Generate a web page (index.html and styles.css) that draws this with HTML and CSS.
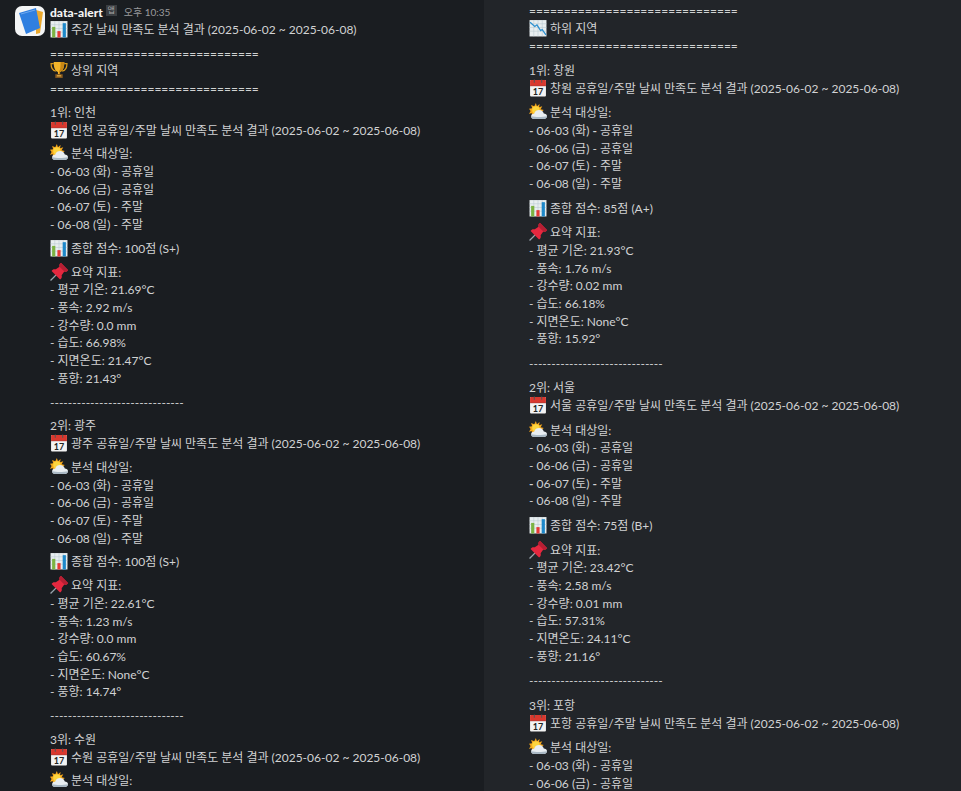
FILE: index.html
```html
<!DOCTYPE html>
<html lang="ko">
<head>
    <meta charset="UTF-8">
    <title>data-alert</title>
    <link rel="stylesheet" href="styles.css">
</head>
<body>

<!-- Emoji drawings -->
<svg class="defs" width="0" height="0">
    <symbol id="e-chart" viewBox="0 0 34 34">
        <rect x="1" y="2" width="32" height="31" fill="#e8eef0"/>
        <path d="M1 9h32M1 16h32M1 23h32M9 2v31M17 2v31M25 2v31" stroke="#b5c6ce" stroke-width="1"/>
        <rect x="4" y="13" width="6" height="20" fill="#7cb342"/>
        <rect x="14" y="21" width="6" height="12" fill="#e53935"/>
        <rect x="24" y="6" width="6" height="27" fill="#1e88c9"/>
    </symbol>
    <symbol id="e-down" viewBox="0 0 34 34">
        <rect x="1" y="2" width="32" height="31" fill="#e8eef0"/>
        <path d="M1 9h32M1 16h32M1 23h32M9 2v31M17 2v31M25 2v31" stroke="#b5c6ce" stroke-width="1"/>
        <path d="M2 6l9 8 4-3 7 11 3-2 7 10" fill="none" stroke="#2b8fd0" stroke-width="2.4"/>
    </symbol>
    <symbol id="e-trophy" viewBox="0 0 34 34">
        <path d="M7 5H2c0 8 3 13 9 14M27 5h5c0 8-3 13-9 14" fill="none" stroke="#d99a1c" stroke-width="2.4"/>
        <path d="M7 2h20c0 10-2 17-8 19v4h-4v-4C9 19 7 12 7 2z" fill="#f1b42a"/>
        <path d="M20 2h7c0 10-2 17-8 19v4h-2V20c3-4 3-10 3-18z" fill="#c98713"/>
        <rect x="10" y="25" width="14" height="7" fill="#8a5a1e"/>
        <rect x="13" y="27" width="8" height="2" fill="#e8b94a"/>
    </symbol>
    <symbol id="e-cal" viewBox="0 0 34 34">
        <rect x="2" y="2" width="30" height="31" rx="2" fill="#f3f3f3"/>
        <path d="M2 4a2 2 0 0 1 2-2h26a2 2 0 0 1 2 2v9H2z" fill="#d9382e"/>
        <path d="M2 13h30" stroke="#9a3b35" stroke-width="1"/>
        <path d="M10 1v6M24 1v6" stroke="#555" stroke-width="2"/>
        <text x="17" y="30" class="cal-num" text-anchor="middle">17</text>
    </symbol>
    <symbol id="e-sun" viewBox="0 0 34 34">
        <path d="M13 0l2 6 5-4-1 6 6-2-3 6 6 1-5 4 3 5H8l-2 3-1-6-5 2 3-6-3-4 6-1-2-6 6 2z" fill="#f6a81b"/>
        <circle cx="13" cy="13" r="7" fill="#fcd53f"/>
        <path d="M10 30c-4 0-6-2-6-5s3-5 6-5c1-5 5-7 9-7 5 0 8 3 9 7 3 0 6 2 6 5s-3 5-6 5z" fill="#e8edf1"/>
        <path d="M10 30c-4 0-6-2-6-5 8 2 21 2 30 0 0 3-3 5-6 5z" fill="#a9b8c4"/>
    </symbol>
    <symbol id="e-pin" viewBox="0 0 34 34">
        <path d="M14 20L1 33" stroke="#99a5ae" stroke-width="2.4"/>
        <path d="M21 0c-3 1-4 4-3 7l-7 5c-4-1-6 0-8 3l16 16c3-2 4-4 3-8l5-7c3 1 6 0 7-3z" fill="#e5283f"/>
        <path d="M21 0l13 13c-1 3-4 4-7 3L18 7c-1-3 0-6 3-7z" fill="#b51f33"/>
    </symbol>
    <symbol id="app-icon" viewBox="0 0 30 30">
        <rect width="30" height="30" rx="7" fill="#f4f5f6"/>
        <path d="M21 4l7 2-3 21-4 1z" fill="#eba92e"/>
        <path d="M4 7L21 2l4 20-14 6z" fill="#2f7fe0"/>
        <path d="M6 8l14-4" stroke="#6fa9ee" stroke-width="1"/>
    </symbol>
</svg>

<div class="panes">

    <!-- Left pane -->
    <div class="pane pane-left">
        <div class="msg">
            <svg class="avatar"><use href="#app-icon"/></svg>
            <div class="msg-body">
                <div class="msg-head">
                    <span class="sender">data-alert</span>
                    <span class="app-badge">앱</span>
                    <span class="time">오후 10:35</span>
                </div>
                <div class="line"><svg class="emoji"><use href="#e-chart"/></svg> 주간 날씨 만족도 분석 결과 (2025-06-02 ~ 2025-06-08)</div>

                <div class="block">
                    <div class="line">==============================</div>
                    <div class="line"><svg class="emoji"><use href="#e-trophy"/></svg> 상위 지역</div>
                    <div class="line">==============================</div>
                </div>

                <div class="block">
                    <div class="line">1위: 인천</div>
                    <div class="line"><svg class="emoji"><use href="#e-cal"/></svg> 인천 공휴일/주말 날씨 만족도 분석 결과 (2025-06-02 ~ 2025-06-08)</div>
                </div>
                <div class="block">
                    <div class="line"><svg class="emoji"><use href="#e-sun"/></svg> 분석 대상일:</div>
                    <div class="line">- 06-03 (화) - 공휴일</div>
                    <div class="line">- 06-06 (금) - 공휴일</div>
                    <div class="line">- 06-07 (토) - 주말</div>
                    <div class="line">- 06-08 (일) - 주말</div>
                </div>
                <div class="block">
                    <div class="line"><svg class="emoji"><use href="#e-chart"/></svg> 종합 점수: 100점 (S+)</div>
                </div>
                <div class="block">
                    <div class="line"><svg class="emoji"><use href="#e-pin"/></svg> 요약 지표:</div>
                    <div class="line">- 평균 기온: 21.69°C</div>
                    <div class="line">- 풍속: 2.92 m/s</div>
                    <div class="line">- 강수량: 0.0 mm</div>
                    <div class="line">- 습도: 66.98%</div>
                    <div class="line">- 지면온도: 21.47°C</div>
                    <div class="line">- 풍향: 21.43°</div>
                </div>
                <div class="block">
                    <div class="line">------------------------------</div>
                </div>

                <div class="block">
                    <div class="line">2위: 광주</div>
                    <div class="line"><svg class="emoji"><use href="#e-cal"/></svg> 광주 공휴일/주말 날씨 만족도 분석 결과 (2025-06-02 ~ 2025-06-08)</div>
                </div>
                <div class="block">
                    <div class="line"><svg class="emoji"><use href="#e-sun"/></svg> 분석 대상일:</div>
                    <div class="line">- 06-03 (화) - 공휴일</div>
                    <div class="line">- 06-06 (금) - 공휴일</div>
                    <div class="line">- 06-07 (토) - 주말</div>
                    <div class="line">- 06-08 (일) - 주말</div>
                </div>
                <div class="block">
                    <div class="line"><svg class="emoji"><use href="#e-chart"/></svg> 종합 점수: 100점 (S+)</div>
                </div>
                <div class="block">
                    <div class="line"><svg class="emoji"><use href="#e-pin"/></svg> 요약 지표:</div>
                    <div class="line">- 평균 기온: 22.61°C</div>
                    <div class="line">- 풍속: 1.23 m/s</div>
                    <div class="line">- 강수량: 0.0 mm</div>
                    <div class="line">- 습도: 60.67%</div>
                    <div class="line">- 지면온도: None°C</div>
                    <div class="line">- 풍향: 14.74°</div>
                </div>
                <div class="block">
                    <div class="line">------------------------------</div>
                </div>

                <div class="block">
                    <div class="line">3위: 수원</div>
                    <div class="line"><svg class="emoji"><use href="#e-cal"/></svg> 수원 공휴일/주말 날씨 만족도 분석 결과 (2025-06-02 ~ 2025-06-08)</div>
                </div>
                <div class="block">
                    <div class="line"><svg class="emoji"><use href="#e-sun"/></svg> 분석 대상일:</div>
                </div>
            </div>
        </div>
    </div>

    <!-- Right pane -->
    <div class="pane pane-right">
        <div class="block">
            <div class="line">==============================</div>
            <div class="line"><svg class="emoji"><use href="#e-down"/></svg> 하위 지역</div>
            <div class="line">==============================</div>
        </div>

        <div class="block">
            <div class="line">1위: 창원</div>
            <div class="line"><svg class="emoji"><use href="#e-cal"/></svg> 창원 공휴일/주말 날씨 만족도 분석 결과 (2025-06-02 ~ 2025-06-08)</div>
        </div>
        <div class="block">
            <div class="line"><svg class="emoji"><use href="#e-sun"/></svg> 분석 대상일:</div>
            <div class="line"><b>-</b> 06-03 (화) <b>-</b> 공휴일</div>
            <div class="line">- 06-06 (금) - 공휴일</div>
            <div class="line">- 06-07 (토) - 주말</div>
            <div class="line">- 06-08 (일) - 주말</div>
        </div>
        <div class="block">
            <div class="line"><svg class="emoji"><use href="#e-chart"/></svg> 종합 점수: 85점 (A+)</div>
        </div>
        <div class="block">
            <div class="line"><svg class="emoji"><use href="#e-pin"/></svg> 요약 지표:</div>
            <div class="line">- 평균 기온: 21.93°C</div>
            <div class="line">- 풍속: 1.76 m/s</div>
            <div class="line">- 강수량: 0.02 mm</div>
            <div class="line">- 습도: 66.18%</div>
            <div class="line">- 지면온도: None°C</div>
            <div class="line">- 풍향: 15.92°</div>
        </div>
        <div class="block">
            <div class="line">------------------------------</div>
        </div>

        <div class="block">
            <div class="line">2위: 서울</div>
            <div class="line"><svg class="emoji"><use href="#e-cal"/></svg> 서울 공휴일/주말 날씨 만족도 분석 결과 (2025-06-02 ~ 2025-06-08)</div>
        </div>
        <div class="block">
            <div class="line"><svg class="emoji"><use href="#e-sun"/></svg> 분석 대상일:</div>
            <div class="line">- 06-03 (화) - 공휴일</div>
            <div class="line">- 06-06 (금) - 공휴일</div>
            <div class="line"><b>-</b> 06-07 (토) <b>-</b> 주말</div>
            <div class="line">- 06-08 (일) - 주말</div>
        </div>
        <div class="block">
            <div class="line"><svg class="emoji"><use href="#e-chart"/></svg> 종합 점수: 75점 (B+)</div>
        </div>
        <div class="block">
            <div class="line"><svg class="emoji"><use href="#e-pin"/></svg> 요약 지표:</div>
            <div class="line">- 평균 기온: 23.42°C</div>
            <div class="line">- 풍속: 2.58 m/s</div>
            <div class="line">- 강수량: 0.01 mm</div>
            <div class="line">- 습도: 57.31%</div>
            <div class="line">- 지면온도: 24.11°C</div>
            <div class="line">- 풍향: 21.16°</div>
        </div>
        <div class="block">
            <div class="line">------------------------------</div>
        </div>

        <div class="block">
            <div class="line">3위: 포항</div>
            <div class="line"><svg class="emoji"><use href="#e-cal"/></svg> 포항 공휴일/주말 날씨 만족도 분석 결과 (2025-06-02 ~ 2025-06-08)</div>
        </div>
        <div class="block">
            <div class="line"><svg class="emoji"><use href="#e-sun"/></svg> 분석 대상일:</div>
            <div class="line">- 06-03 (화) - 공휴일</div>
            <div class="line">- 06-06 (금) - 공휴일</div>
        </div>
    </div>

</div>

</body>
</html>
```

FILE: styles.css
```css
html, body {
    height: 100%;
}

body {
    margin: 0;
    overflow: hidden;
    background: #1a1d21;
    color: #d1d2d3;
    font-family: Lato, "Noto Sans CJK KR", sans-serif;
    font-size: 12px;
    line-height: 17.7px;
}

.defs {
    position: absolute;
    overflow: visible;
}

.panes {
    display: flex;
    height: 791px;
    overflow: hidden;
}

.pane {
    overflow: hidden;
}

.pane-left {
    width: 484px;
    padding-top: 4px;
    background: #1a1d21;
}

.pane-right {
    flex: 1;
    padding: 2px 0 0 45px;
    background: #222529;
}

/* Message */
.msg {
    display: flex;
    padding-left: 15px;
}

.avatar {
    flex: none;
    width: 30px;
    height: 30px;
    margin: 2px 5px 0 0;
}

.msg-head {
    display: flex;
    align-items: center;
    height: 17px;
}

.sender {
    color: #f3f3f3;
    font-weight: 900;
}

.app-badge {
    width: 11px;
    height: 11px;
    margin: -4px 0 0 3px;
    background: #3a3d41;
    color: #a3a4a6;
    font-size: 8px;
    line-height: 11px;
    text-align: center;
}

.time {
    margin-left: 7px;
    color: #9a9b9d;
    font-size: 10px;
}

.line {
    white-space: nowrap;
}

.block {
    margin-top: 6.050px;
}

.pane-right .block {
    margin-top: 6.850px;
}

.pane-right .block:first-child {
    margin-top: 0;
}

.emoji {
    width: 18px;
    height: 18px;
    margin: -5px 0;
    vertical-align: 1px;
}

.cal-num {
    fill: #222;
    font-family: Lato, sans-serif;
    font-size: 17px;
    font-weight: 700;
}
```
